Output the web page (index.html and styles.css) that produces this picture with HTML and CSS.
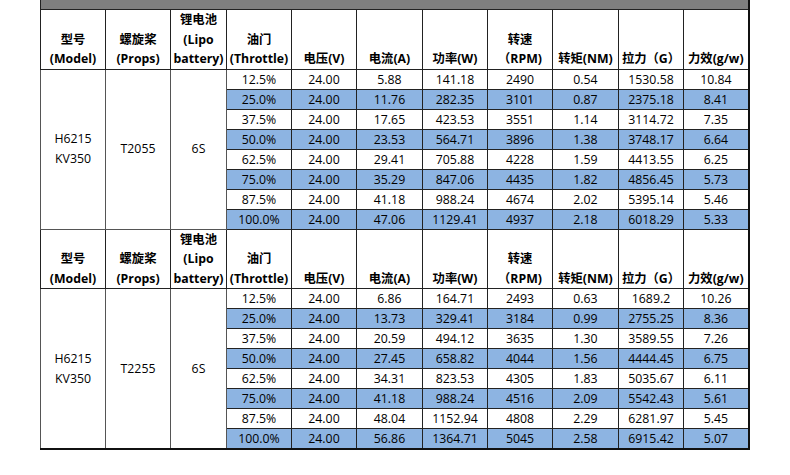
FILE: index.html
```html
<!DOCTYPE html>
<html lang="zh">
<head>
<meta charset="utf-8">
<link rel="stylesheet" href="styles.css">
</head>
<body>
<div class="page">
<table class="spec">
<colgroup>
<col class="c65"><col class="c65"><col class="c56"><col class="c65"><col class="c65"><col class="c66"><col class="c65"><col class="c65"><col class="c66"><col class="c65"><col class="c65">
</colgroup>
<tbody>
<tr class="bar"><td colspan="11"></td></tr>
<tr class="head">
<th>型号<br>(Model)</th><th>螺旋桨<br>(Props)</th><th>锂电池<br>(Lipo<br>battery)</th><th>油门<br>(Throttle)</th><th>电压(V)</th><th>电流(A)</th><th>功率(W)</th><th>转速<br>（RPM)</th><th>转矩(NM)</th><th>拉力（G）</th><th>力效(g/w)</th>
</tr>
<tr><td rowspan="8" class="merged">H6215<br>KV350</td><td rowspan="8" class="merged">T2055</td><td rowspan="8" class="merged">6S</td><td>12.5%</td><td>24.00</td><td>5.88</td><td>141.18</td><td>2490</td><td>0.54</td><td>1530.58</td><td>10.84</td></tr>
<tr class="blue"><td>25.0%</td><td>24.00</td><td>11.76</td><td>282.35</td><td>3101</td><td>0.87</td><td>2375.18</td><td>8.41</td></tr>
<tr><td>37.5%</td><td>24.00</td><td>17.65</td><td>423.53</td><td>3551</td><td>1.14</td><td>3114.72</td><td>7.35</td></tr>
<tr class="blue"><td>50.0%</td><td>24.00</td><td>23.53</td><td>564.71</td><td>3896</td><td>1.38</td><td>3748.17</td><td>6.64</td></tr>
<tr><td>62.5%</td><td>24.00</td><td>29.41</td><td>705.88</td><td>4228</td><td>1.59</td><td>4413.55</td><td>6.25</td></tr>
<tr class="blue"><td>75.0%</td><td>24.00</td><td>35.29</td><td>847.06</td><td>4435</td><td>1.82</td><td>4856.45</td><td>5.73</td></tr>
<tr><td>87.5%</td><td>24.00</td><td>41.18</td><td>988.24</td><td>4674</td><td>2.02</td><td>5395.14</td><td>5.46</td></tr>
<tr class="blue"><td>100.0%</td><td>24.00</td><td>47.06</td><td>1129.41</td><td>4937</td><td>2.18</td><td>6018.29</td><td>5.33</td></tr>
<tr class="head">
<th>型号<br>(Model)</th><th>螺旋桨<br>(Props)</th><th>锂电池<br>(Lipo<br>battery)</th><th>油门<br>(Throttle)</th><th>电压(V)</th><th>电流(A)</th><th>功率(W)</th><th>转速<br>（RPM)</th><th>转矩(NM)</th><th>拉力（G）</th><th>力效(g/w)</th>
</tr>
<tr><td rowspan="8" class="merged">H6215<br>KV350</td><td rowspan="8" class="merged">T2255</td><td rowspan="8" class="merged">6S</td><td>12.5%</td><td>24.00</td><td>6.86</td><td>164.71</td><td>2493</td><td>0.63</td><td>1689.2</td><td>10.26</td></tr>
<tr class="blue"><td>25.0%</td><td>24.00</td><td>13.73</td><td>329.41</td><td>3184</td><td>0.99</td><td>2755.25</td><td>8.36</td></tr>
<tr><td>37.5%</td><td>24.00</td><td>20.59</td><td>494.12</td><td>3635</td><td>1.30</td><td>3589.55</td><td>7.26</td></tr>
<tr class="blue"><td>50.0%</td><td>24.00</td><td>27.45</td><td>658.82</td><td>4044</td><td>1.56</td><td>4444.45</td><td>6.75</td></tr>
<tr><td>62.5%</td><td>24.00</td><td>34.31</td><td>823.53</td><td>4305</td><td>1.83</td><td>5035.67</td><td>6.11</td></tr>
<tr class="blue"><td>75.0%</td><td>24.00</td><td>41.18</td><td>988.24</td><td>4516</td><td>2.09</td><td>5542.43</td><td>5.61</td></tr>
<tr><td>87.5%</td><td>24.00</td><td>48.04</td><td>1152.94</td><td>4808</td><td>2.29</td><td>6281.97</td><td>5.45</td></tr>
<tr class="blue last"><td>100.0%</td><td>24.00</td><td>56.86</td><td>1364.71</td><td>5045</td><td>2.58</td><td>6915.42</td><td>5.07</td></tr>
</tbody>
</table>
</div>
</body>
</html>
```

FILE: styles.css
```css
html, body {
  margin: 0;
  padding: 0;
  background: #ffffff;
}

.page {
  padding-left: 40px;
  font-family: "Open Sans", "Noto Sans CJK SC", sans-serif;
  font-size: 12.3px;
  color: #000;
}

.spec {
  border-collapse: collapse;
  table-layout: fixed;
  width: 709px;
  border-left: 1px solid #111;
  border-right: 2px solid #111;
  border-bottom: 2px solid #111;
}

.c65 { width: 65px; }
.c56 { width: 56px; }
.c66 { width: 66px; }

.spec td,
.spec th {
  border: 1px solid #222;
  padding: 0;
  text-align: center;
  height: 19px;
  line-height: 19px;
  white-space: nowrap;
  overflow: hidden;
}

.spec .bar td {
  height: 9px;
  line-height: 9px;
  background: #7f7f7f;
  border-top: none;
  border-bottom: 1px solid #222;
}

.spec .head th {
  font-weight: 700;
  vertical-align: bottom;
  height: 58px;
  line-height: 19.5px;
}

.spec .merged {
  vertical-align: middle;
  line-height: 20px;
  border-color: #555;
}

.spec .blue td {
  background: #8db4e2;
}
```
